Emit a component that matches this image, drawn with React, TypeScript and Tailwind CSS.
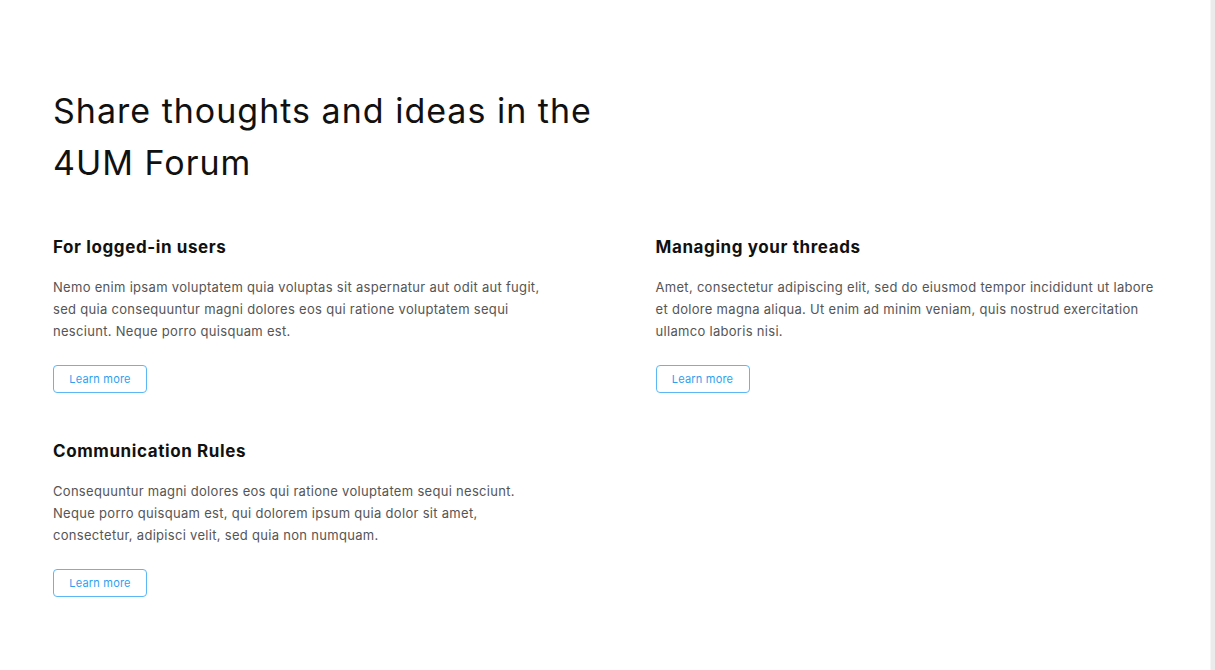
import React from "react";

const sections = [
  {
    title: "For logged-in users",
    lines: [
      "Nemo enim ipsam voluptatem quia voluptas sit aspernatur aut odit aut fugit,",
      "sed quia consequuntur magni dolores eos qui ratione voluptatem sequi",
      "nesciunt. Neque porro quisquam est.",
    ],
  },
  {
    title: "Managing your threads",
    lines: [
      "Amet, consectetur adipiscing elit, sed do eiusmod tempor incididunt ut labore",
      "et dolore magna aliqua. Ut enim ad minim veniam, quis nostrud exercitation",
      "ullamco laboris nisi.",
    ],
  },
  {
    title: "Communication Rules",
    lines: [
      "Consequuntur magni dolores eos qui ratione voluptatem sequi nesciunt.",
      "Neque porro quisquam est, qui dolorem ipsum quia dolor sit amet,",
      "consectetur, adipisci velit, sed quia non numquam.",
    ],
  },
];

export default function App() {
  return (
    <div
      className="flex min-h-[670px] w-full bg-white"
      style={{ fontFamily: "Inter, 'Open Sans', sans-serif" }}
    >
      <main className="flex-1 px-[53px] pt-[85px]">
        <h1 className="max-w-[600px] text-[34px] font-normal leading-[52px] tracking-[1px] text-[#111]">
          Share thoughts and ideas in the 4UM Forum
        </h1>
        <div className="mt-[46px] grid grid-cols-2 gap-x-[101px] gap-y-[46px]">
          {sections.map((s) => (
            <section key={s.title} className="flex flex-col items-start">
              <h2 className="text-[17px] font-bold leading-[24px] tracking-[0.6px] text-[#111]">
                {s.title}
              </h2>
              <p className="mt-[17px] text-[13px] leading-[22px] tracking-[0.3px] text-[#555]">
                {s.lines.map((l, i) => (
                  <React.Fragment key={i}>
                    {l}
                    {i < s.lines.length - 1 && <br />}
                  </React.Fragment>
                ))}
              </p>
              <button className="mt-[23px] h-[28px] w-[94px] rounded-[4px] border border-[#5cb8f5] text-[11px] tracking-[0.2px] text-[#2d9ff0]">
                Learn more
              </button>
            </section>
          ))}
        </div>
      </main>
      <div className="w-[5px] shrink-0 border-l border-[#f5f5f5] bg-[#ebebeb]" />
    </div>
  );
}
